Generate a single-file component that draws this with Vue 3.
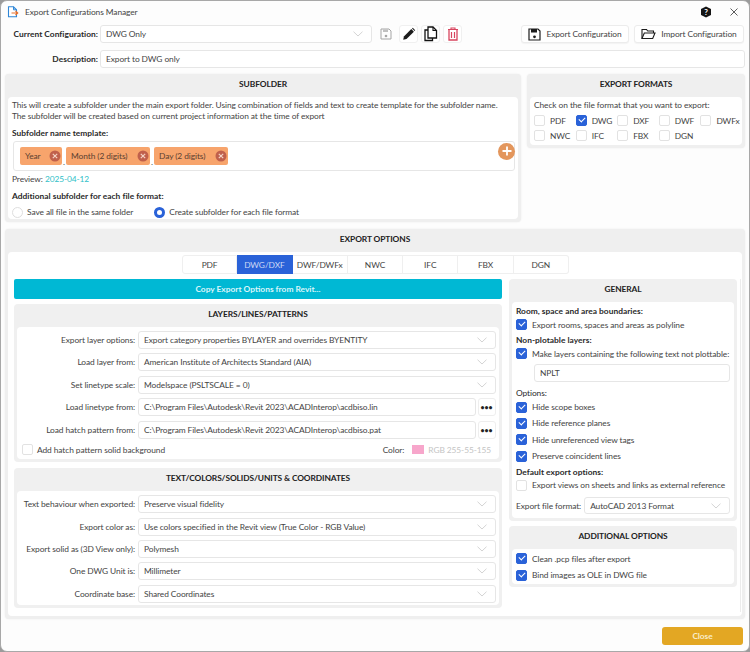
<template>
  <div class="window">
    <div class="titlebar">
      <svg class="app-icon" viewBox="0 0 12 12" width="12" height="12">
        <path d="M1.5 .8h5l3 3v7h-8z" fill="#fff" stroke="#2f86d6" stroke-width="1.1" />
        <path d="M6.5 .8v3h3" fill="none" stroke="#2f86d6" stroke-width="1" />
        <path d="M4.5 7h6M8.5 5l2.2 2-2.2 2" fill="none" stroke="#e8702a" stroke-width="1.2" />
      </svg>
      <span class="title">Export Configurations Manager</span>
      <svg class="help" viewBox="0 0 12 12" width="12" height="12">
        <path d="M6 .5l5 2.5v6l-5 2.5-5-2.5v-6z" fill="#151515" />
        <text x="6" y="8.8" text-anchor="middle" class="help-mark">?</text>
      </svg>
      <svg class="close-x" viewBox="0 0 8 8" width="8" height="8">
        <path d="M.5.5l7 7M7.500.5l-7 7" stroke="#333" stroke-width=".8" />
      </svg>
    </div>

    <div class="config-row">
      <label class="row-label strong">Current Configuration:</label>
      <div class="combo current">
        <span>DWG Only</span>
        <svg class="chev" viewBox="0 0 10 6" width="10" height="6"><path d="M.5.7L5 5l4.500-4.300" /></svg>
      </div>
      <button class="tool plain">
        <svg viewBox="0 0 12 12" width="12" height="12">
          <path d="M1 1h8l2 2v8H1z" fill="none" stroke="#a5a5a5" />
          <path d="M3 1.500h5v2.500H3z" fill="#c0c0c0" />
          <circle cx="6" cy="8" r="1.300" fill="#a5a5a5" />
        </svg>
      </button>
      <button class="tool">
        <svg viewBox="0 0 14 14" width="14" height="14">
          <path d="M1.200 12.800l.7-3.300 7.400-7.400 2.600 2.600-7.400 7.400z" fill="#1c1c1c" />
          <path d="M10 1.400l.8-.6 2.400 2.400-.6.800z" fill="#1c1c1c" />
        </svg>
      </button>
      <button class="tool">
        <svg viewBox="0 0 15 16" width="15" height="16">
          <path d="M5 1h5l3.500 3.500V12H5z" fill="none" stroke="#111" stroke-width="1.300" />
          <path d="M10 1v3.500h3.500" fill="none" stroke="#111" stroke-width="1.100" />
          <path d="M5 4H2v10.500h7.500V12" fill="none" stroke="#111" stroke-width="1.300" />
        </svg>
      </button>
      <button class="tool">
        <svg viewBox="0 0 12 14" width="12" height="14">
          <path d="M1 2.500h10M4 2.500V1h4v1.500" fill="none" stroke="#d8455f" stroke-width="1.100" />
          <path d="M2 3v10h8V3" fill="none" stroke="#d8455f" stroke-width="1.300" />
          <path d="M4.500 5v6M7.500 5v6" stroke="#d8455f" stroke-width="1.200" />
        </svg>
      </button>
      <button class="action export">
        <svg viewBox="0 0 13 13" width="13" height="13">
          <path d="M1 1h9l2 2v9H1z" fill="none" stroke="#1c1c1c" stroke-width="1.200" />
          <path d="M3 1h6v3.500H3z" fill="#1c1c1c" />
          <circle cx="6.500" cy="8.800" r="1.400" fill="#1c1c1c" />
        </svg>
        Export Configuration
      </button>
      <button class="action import">
        <svg viewBox="0 0 15 12" width="15" height="12">
          <path d="M1 10.500V1.500h4.500l1.200 1.500H12.500v2" fill="none" stroke="#1c1c1c" stroke-width="1.100" />
          <path d="M1 10.500l2.300-5.500H14l-2.300 5.500z" fill="none" stroke="#1c1c1c" stroke-width="1.100" />
        </svg>
        Import Configuration
      </button>
    </div>

    <div class="config-row desc-row">
      <label class="row-label strong">Description:</label>
      <div class="combo grow">Export to DWG only</div>
    </div>

    <div class="top-cards">
      <section class="card subfolder">
        <h3>SUBFOLDER</h3>
        <div class="card-body">
          <p class="info">
            This will create a subfolder under the main export folder. Using combination of fields and text to create template for the subfolder name.<br />
            The subfolder will be created based on current project information at the time of export
          </p>
          <div class="strong sub-label">Subfolder name template:</div>
          <div class="template">
            <template v-for="(tag, i) in tags" :key="tag.text">
              <span v-if="i > 0" class="dot">.</span>
              <span class="tag" :style="{ width: tag.w + 'px' }">
                {{ tag.text }}
                <svg viewBox="0 0 12 12" width="12" height="12">
                  <circle cx="6" cy="6" r="5.500" fill="#c0604c" />
                  <path d="M3.800 3.800l4.400 4.400M8.200 3.800l-4.400 4.400" stroke="#f4d2c4" stroke-width="1.200" />
                </svg>
              </span>
            </template>
            <span class="add">
              <svg viewBox="0 0 10 10" width="10" height="10"><path d="M5 .5v9M.5 5h9" stroke="#fff" stroke-width="1.800" /></svg>
            </span>
          </div>
          <div class="preview">Preview: <span class="date">2025-04-12</span></div>
          <div class="strong sub-label second">Additional subfolder for each file format:</div>
          <div class="radios">
            <span class="radio-item"><i class="radio"></i>Save all file in the same folder</span>
            <span class="radio-item"><i class="radio on"></i>Create subfolder for each file format</span>
          </div>
        </div>
      </section>

      <section class="card formats">
        <h3>EXPORT FORMATS</h3>
        <div class="card-body">
          <p class="info">Check on the file format that you want to export:</p>
          <div class="format-grid">
            <span v-for="f in formats" :key="f" class="check-item">
              <i class="box" :class="{ on: f === 'DWG' }"></i>{{ f }}
            </span>
          </div>
        </div>
      </section>
    </div>

    <section class="card options">
      <h3>EXPORT OPTIONS</h3>
      <div class="options-body">
        <div class="tabs">
          <span v-for="t in tabs" :key="t" class="tab" :class="{ active: t === 'DWG/DXF' }">{{ t }}</span>
        </div>
        <div class="columns">
          <div class="left">
            <button class="copy-btn">Copy Export Options from Revit...</button>

            <section class="card inner layers">
              <h3>LAYERS/LINES/PATTERNS</h3>
              <div class="card-body form">
                <div v-for="r in layerRows" :key="r.label" class="form-row">
                  <label>{{ r.label }}</label>
                  <div class="combo grow">
                    <span>{{ r.value }}</span>
                    <svg v-if="!r.browse" class="chev" viewBox="0 0 10 6" width="10" height="6"><path d="M.5.7L5 5l4.500-4.300" /></svg>
                  </div>
                  <button v-if="r.browse" class="dots">•••</button>
                </div>
                <div class="hatch">
                  <i class="box"></i>
                  <span>Add hatch pattern solid background</span>
                  <span class="color-label">Color:</span>
                  <i class="swatch"></i>
                  <span class="rgb">RGB 255-55-155</span>
                </div>
              </div>
            </section>

            <section class="card inner texts">
              <h3>TEXT/COLORS/SOLIDS/UNITS &amp; COORDINATES</h3>
              <div class="card-body form">
                <div v-for="r in textRows" :key="r.label" class="form-row">
                  <label>{{ r.label }}</label>
                  <div class="combo grow">
                    <span>{{ r.value }}</span>
                    <svg class="chev" viewBox="0 0 10 6" width="10" height="6"><path d="M.5.7L5 5l4.500-4.300" /></svg>
                  </div>
                </div>
              </div>
            </section>
          </div>

          <div class="right">
            <section class="card inner general">
              <h3>GENERAL</h3>
              <div class="card-body list">
                <div class="strong group">Room, space and area boundaries:</div>
                <span class="check-line"><i class="box on"></i>Export rooms, spaces and areas as polyline</span>
                <div class="strong group">Non-plotable layers:</div>
                <span class="check-line"><i class="box on"></i>Make layers containing the following text not plottable:</span>
                <div class="combo npl">NPLT</div>
                <div class="group opts">Options:</div>
                <span v-for="o in generalOpts" :key="o" class="check-line tall"><i class="box on"></i>{{ o }}</span>
                <div class="strong group defaults">Default export options:</div>
                <span class="check-line"><i class="box"></i>Export views on sheets and links as external reference</span>
                <div class="file-format">
                  <label>Export file format:</label>
                  <div class="combo grow">
                    <span>AutoCAD 2013 Format</span>
                    <svg class="chev" viewBox="0 0 10 6" width="10" height="6"><path d="M.5.7L5 5l4.500-4.300" /></svg>
                  </div>
                </div>
              </div>
            </section>

            <section class="card inner additional">
              <h3>ADDITIONAL OPTIONS</h3>
              <div class="card-body list">
                <span class="check-line tall"><i class="box on"></i>Clean .pcp files after export</span>
                <span class="check-line tall"><i class="box on"></i>Bind images as OLE in DWG file</span>
              </div>
            </section>
          </div>
        </div>
      </div>
    </section>

    <div class="footer">
      <button class="close-btn">Close</button>
    </div>
  </div>
</template>

<script setup>
const tags = [
  { text: 'Year', w: 42 },
  { text: 'Month (2 digits)', w: 84 },
  { text: 'Day (2 digits)', w: 74 }
]
const formats = ['PDF', 'DWG', 'DXF', 'DWF', 'DWFx', 'NWC', 'IFC', 'FBX', 'DGN']
const tabs = ['PDF', 'DWG/DXF', 'DWF/DWFx', 'NWC', 'IFC', 'FBX', 'DGN']

const layerRows = [
  { label: 'Export layer options:', value: 'Export category properties BYLAYER and overrides BYENTITY' },
  { label: 'Load layer from:', value: 'American Institute of Architects Standard (AIA)' },
  { label: 'Set linetype scale:', value: 'Modelspace (PSLTSCALE = 0)' },
  { label: 'Load linetype from:', value: 'C:\\Program Files\\Autodesk\\Revit 2023\\ACADInterop\\acdbiso.lin', browse: true },
  { label: 'Load hatch pattern from:', value: 'C:\\Program Files\\Autodesk\\Revit 2023\\ACADInterop\\acdbiso.pat', browse: true }
]

const textRows = [
  { label: 'Text behaviour when exported:', value: 'Preserve visual fidelity' },
  { label: 'Export color as:', value: 'Use colors specified in the Revit view (True Color - RGB Value)' },
  { label: 'Export solid as (3D View only):', value: 'Polymesh' },
  { label: 'One DWG Unit is:', value: 'Millimeter' },
  { label: 'Coordinate base:', value: 'Shared Coordinates' }
]

const generalOpts = ['Hide scope boxes', 'Hide reference planes', 'Hide unreferenced view tags', 'Preserve coincident lines']
</script>

<style>
html,
body {
  margin: 0;
  background: #9b9b9b;
}
</style>

<style scoped>
.window {
  width: 750px;
  height: 652px;
  box-sizing: border-box;
  padding: 0 4px;
  background: #fdfdfd;
  border: 1px solid #a8a8a8;
  border-radius: 7px;
  overflow: hidden;
  font-family: Lato, "Open Sans", sans-serif;
  font-size: 8.4px;
  letter-spacing: -0.09px;
  color: #444;
}

button {
  font-family: inherit;
  font-size: inherit;
  letter-spacing: inherit;
  color: inherit;
  margin: 0;
  padding: 0;
  cursor: pointer;
}

p {
  margin: 0;
}

i {
  display: block;
  flex: none;
}

.strong {
  font-weight: 700;
  letter-spacing: 0.02px;
  color: #2a2a2a;
}

.titlebar {
  height: 21px;
  display: flex;
  align-items: center;
  padding-left: 2px;
}

.title {
  margin-left: 6px;
  flex: 1;
  color: #444;
}

.help {
  margin-right: 18px;
}

.help-mark {
  font-size: 8px;
  font-weight: 700;
  fill: #fff;
}

.close-x {
  margin-right: 7px;
}

.config-row {
  display: flex;
  align-items: center;
  height: 18px;
  margin-top: 3px;
}

.desc-row {
  margin-top: 7px;
}

.row-label {
  width: 93px;
  text-align: right;
  margin-right: 2px;
  flex: none;
}

.combo {
  height: 100%;
  box-sizing: border-box;
  display: flex;
  align-items: center;
  justify-content: space-between;
  padding: 0 5px;
  background: #fff;
  border: 1px solid #e6e6e6;
  border-radius: 3px;
  color: #444;
}

.grow {
  flex: 1;
  min-width: 0;
}

.current {
  width: 272px;
  flex: none;
}

.chev {
  fill: none;
  stroke: #d4d4d4;
  stroke-width: 1;
  margin-right: 3px;
  flex: none;
}

.tool {
  width: 19px;
  height: 18px;
  display: flex;
  align-items: center;
  justify-content: center;
  background: #fff;
  border: 1px solid #f0f0f0;
  border-radius: 3px;
  margin-left: 3px;
}

.tool.plain {
  margin-left: 4px;
  border: none;
  background: none;
  margin-right: 1px;
}

.action {
  height: 18px;
  display: flex;
  align-items: center;
  justify-content: center;
  gap: 5px;
  background: #fff;
  border: 1px solid #ececec;
  border-radius: 3px;
  box-shadow: 0 1px 1px rgba(0, 0, 0, 0.04);
}

.export {
  width: 108px;
  margin-left: 59px;
}

.import {
  width: 110px;
  margin-left: 5px;
}

.top-cards {
  display: flex;
  gap: 6px;
  margin-top: 6px;
  align-items: flex-start;
}

.card {
  background: #efefef;
  border-radius: 4px;
  padding: 0 3px 3px;
  box-sizing: border-box;
  box-shadow: 0 0 2px rgba(0, 0, 0, 0.08);
}

h3 {
  margin: 0;
  height: 23px;
  line-height: 20px;
  text-align: center;
  font-size: 8.4px;
  font-weight: 700;
  letter-spacing: -0.1px;
  color: #222;
}

.card-body {
  background: #fff;
  border-radius: 4px;
}

.subfolder {
  width: 517px;
  height: 148px;
}

.subfolder .card-body {
  height: 122px;
  box-sizing: border-box;
  padding: 3px 0 0 4px;
}

.info {
  line-height: 11px;
}

.sub-label {
  margin-top: 5.500px;
  line-height: 11px;
}

.sub-label.second {
  margin-top: 6px;
}

.template {
  position: relative;
  margin: 2px 3px 0 1px;
  height: 30px;
  box-sizing: border-box;
  border: 1px solid #e6e6e6;
  border-radius: 3px;
  display: flex;
  align-items: center;
  padding: 0 6px;
}

.tag {
  height: 18px;
  box-sizing: border-box;
  display: flex;
  align-items: center;
  justify-content: space-between;
  padding: 0 1px 0 5px;
  background: #f7a46c;
  border-radius: 2px;
  color: #5c4030;
  white-space: nowrap;
}

.dot {
  width: 4px;
  text-align: center;
  align-self: flex-end;
  line-height: 9px;
  padding-bottom: 3px;
}

.add {
  position: absolute;
  right: -1px;
  top: 1px;
  width: 17px;
  height: 17px;
  border-radius: 50%;
  background: #e3965c;
  display: flex;
  align-items: center;
  justify-content: center;
}

.preview {
  margin-top: 3.500px;
  line-height: 11px;
}

.date {
  color: #2fc0c8;
}

.radios {
  display: flex;
  margin-top: 5px;
  gap: 21px;
}

.radio-item {
  display: flex;
  align-items: center;
  gap: 4px;
  line-height: 11px;
}

.radio {
  width: 11px;
  height: 11px;
  box-sizing: border-box;
  border: 1px solid #dedede;
  border-radius: 50%;
  background: #fff;
}

.radio.on {
  border: 3px solid #2a62d8;
}

.formats {
  width: 218px;
  height: 74px;
}

.formats .card-body {
  height: 48px;
  box-sizing: border-box;
  padding: 3px 0 0 4px;
}

.format-grid {
  display: grid;
  grid-template-columns: repeat(5, 41.600px);
  grid-auto-rows: 15px;
  margin-top: 2px;
}

.check-item {
  display: flex;
  align-items: center;
  gap: 5px;
}

.box {
  width: 11px;
  height: 11px;
  box-sizing: border-box;
  border: 1px solid #e2e2e2;
  border-radius: 2px;
  background: #fff;
  position: relative;
}

.box.on {
  background: #2a62d8;
  border-color: #2a62d8;
}

.box.on::after {
  content: "";
  position: absolute;
  left: 2px;
  top: 1px;
  width: 5px;
  height: 3px;
  border-left: 1.300px solid #fff;
  border-bottom: 1.300px solid #fff;
  transform: rotate(-45deg);
}

.options {
  height: 389.500px;
  margin-top: 7px;
}

.options-body {
  background: #fff;
  border-radius: 4px;
  height: 363.500px;
  padding: 3px 0 0 6px;
  box-sizing: border-box;
}

.tabs {
  display: flex;
  justify-content: center;
  width: 723px;
  height: 19px;
}

.tab {
  width: 55.300px;
  height: 19px;
  line-height: 19px;
  text-align: center;
  border: 1px solid #efefef;
  border-left: none;
  box-sizing: border-box;
}

.tab:first-child {
  border-left: 1px solid #efefef;
  border-radius: 3px 0 0 3px;
}

.tab:last-child {
  border-radius: 0 3px 3px 0;
}

.tab.active {
  background: #2a62d8;
  border-color: #2a62d8;
  color: #cdd9f5;
}

.columns {
  display: flex;
  gap: 7px;
  margin-top: 5px;
}

.left {
  width: 488px;
  flex: none;
}

.copy-btn {
  display: block;
  width: 100%;
  height: 20px;
  border: none;
  border-radius: 2px;
  background: #00b8d4;
  color: #d9f6fa;
  font-weight: 700;
  letter-spacing: 0;
}

.inner {
  background: #f0f0f0;
  box-shadow: none;
}

.layers {
  margin-top: 5px;
}

.texts {
  margin-top: 6px;
}

.form {
  padding: 4px 0 1px;
}

.texts .form {
  padding: 4.700px 0 2px;
}

.form-row {
  display: flex;
  align-items: center;
  height: 18px;
  margin-bottom: 4.400px;
  padding-right: 3.500px;
}

.form-row:last-child {
  margin-bottom: 0;
}

.form-row label,
.file-format label {
  white-space: nowrap;
}

.form-row label {
  width: 121px;
  padding-right: 3px;
  box-sizing: border-box;
  text-align: right;
  flex: none;
}

.dots {
  width: 18px;
  height: 18px;
  margin-left: 2px;
  border: 1px solid #eee;
  border-radius: 3px;
  background: #fff;
  color: #222;
  font-size: 7px;
  font-weight: 700;
  flex: none;
}

.hatch {
  display: flex;
  align-items: center;
  gap: 4px;
  height: 16px;
  margin-top: -1.400px;
  padding: 0 0 0 5px;
}

.color-label {
  margin-left: auto;
}

.swatch {
  width: 12px;
  height: 9px;
  background: #f7a6cb;
  margin-left: 4px;
}

.rgb {
  color: #c4c4c4;
  margin-right: 8px;
}

.right {
  width: 232px;
  height: 333px;
  padding-right: 3px;
  box-sizing: border-box;
  border-right: 1px solid #ececec;
  flex: none;
}

.general {
  height: 241.700px;
}

.list {
  padding: 4px 4px 0;
  display: flex;
  flex-direction: column;
  height: 216px;
  box-sizing: border-box;
}

.group {
  line-height: 11px;
  margin-top: 3px;
  color: #2a2a2a;
}

.group:first-child {
  margin-top: 0;
}

.check-line {
  display: flex;
  align-items: center;
  gap: 5px;
  height: 15px;
  white-space: nowrap;
  flex: none;
}

.check-line.tall {
  height: 16.300px;
}

.npl {
  margin: 3px 0 0 18px;
  height: 18px;
  flex: none;
  justify-content: flex-start;
}

.group.opts {
  margin-top: 6px;
}

.group.defaults {
  margin-top: 2.600px;
}

.file-format {
  display: flex;
  align-items: center;
  gap: 3px;
  height: 17.500px;
  margin-top: 4px;
}

.additional {
  margin-top: 5.500px;
  height: 61px;
}

.additional .list {
  height: 35px;
  padding: 1.500px 4px 0;
}

.footer {
  display: flex;
  justify-content: flex-end;
  margin-top: 8px;
  padding-right: 2px;
}

.close-btn {
  width: 81px;
  height: 18.500px;
  border: none;
  border-radius: 3px;
  background: #e3a723;
  color: #f9eccb;
  font-weight: 700;
}
</style>
